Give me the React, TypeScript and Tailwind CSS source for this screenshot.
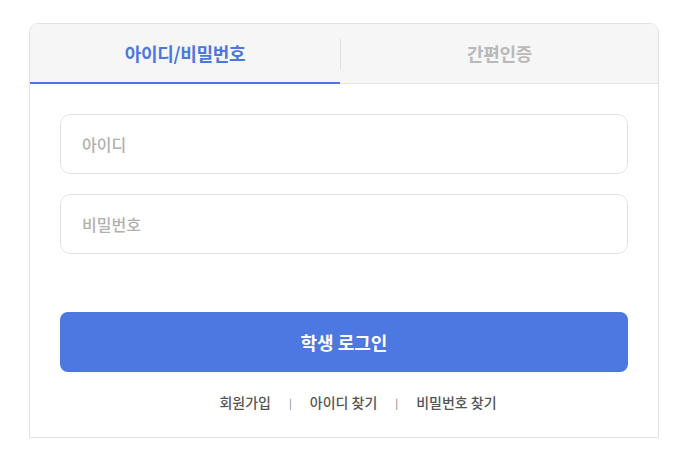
import React, { useState } from 'react';

const FONT = { fontFamily: '"Noto Sans CJK KR", "Noto Sans", sans-serif' };

const App: React.FC = () => {
  const [tab, setTab] = useState<'id' | 'simple'>('id');

  return (
    <div className="min-h-screen bg-white" style={FONT}>
      <div className="ml-[29px] pt-[23px]">
        <div className="w-[630px] border border-[#e3e3e3] rounded-t-[9px] overflow-hidden">
          {/* Tabs */}
          <div className="flex bg-[#f6f6f6] h-[60px]">
            <button
              onClick={() => setTab('id')}
              className={`w-[310px] flex items-center justify-center text-[18px] font-bold tracking-[-0.3px] ${
                tab === 'id' ? 'text-[#4d77de] border-b-2 border-[#4d77de]' : 'text-[#b9b9b9] border-b border-[#e3e3e3]'
              }`}
            >
              아이디/비밀번호
            </button>
            <div className="w-px bg-[#e1e1e1] my-[15px]" />
            <button
              onClick={() => setTab('simple')}
              className={`flex-1 flex items-center justify-center text-[18px] font-bold tracking-[-0.3px] ${
                tab === 'simple' ? 'text-[#4d77de] border-b-2 border-[#4d77de]' : 'text-[#b9b9b9] border-b border-[#e3e3e3]'
              }`}
            >
              간편인증
            </button>
          </div>

          {/* Form */}
          <div className="px-[30px] pt-[30px] pb-[24px] bg-white">
            <input
              placeholder="아이디"
              className="w-full h-[60px] rounded-[10px] border border-[#e2e2e2] px-[21px] text-[16px] font-medium text-[#333] placeholder:text-[#b0b0b0] outline-none"
            />
            <input
              type="password"
              placeholder="비밀번호"
              className="mt-[20px] w-full h-[60px] rounded-[10px] border border-[#e2e2e2] px-[21px] text-[16px] font-medium text-[#333] placeholder:text-[#b0b0b0] outline-none"
            />
            <button className="mt-[58px] w-full h-[60px] rounded-[8px] bg-[#4d78e1] text-white text-[18px] font-bold">
              학생 로그인
            </button>
            <div className="mt-[20px] pl-[28px] flex items-center justify-center text-[14px] font-medium text-[#555]">
              <a className="cursor-pointer">회원가입</a>
              <span className="mx-[18px] text-[10px] text-[#888]">|</span>
              <a className="cursor-pointer">아이디 찾기</a>
              <span className="mx-[18px] text-[10px] text-[#888]">|</span>
              <a className="cursor-pointer">비밀번호 찾기</a>
            </div>
          </div>
        </div>
      </div>
    </div>
  );
};

export default App;
